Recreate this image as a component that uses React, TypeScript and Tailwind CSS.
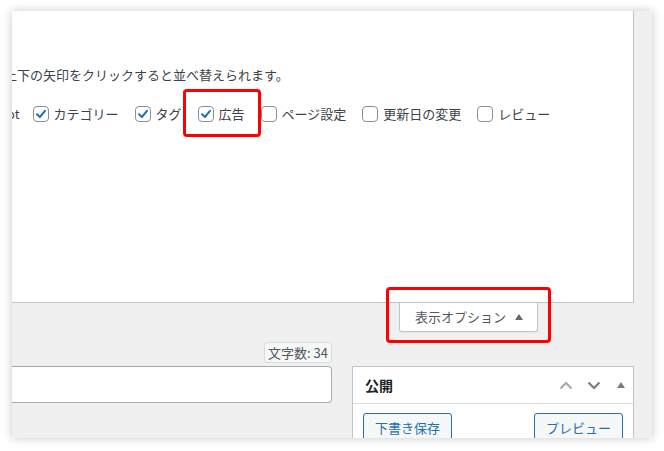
import React from "react";

const jp = { fontFamily: '"Noto Sans CJK JP", "Noto Sans", sans-serif' };

const Box = ({ checked }: { checked?: boolean }) => (
  <span className="flex h-[16px] w-[16px] shrink-0 items-center justify-center rounded-[4px] border border-[#8c8f94] bg-white">
    {checked && (
      <svg width="14" height="14" viewBox="0 0 14 14">
        <path d="M3 7.2 L5.9 10 L11 3.8" fill="none" stroke="#2271b1" strokeWidth="2" strokeLinecap="round" strokeLinejoin="round" />
      </svg>
    )}
  </span>
);

const Option = ({ label, checked }: { label: string; checked?: boolean }) => (
  <label className="flex items-center gap-[5px]">
    <Box checked={checked} />
    <span>{label}</span>
  </label>
);

const Triangle = ({ color }: { color: string }) => (
  <svg width="8" height="6" viewBox="0 0 8 6">
    <path d="M0 6 L4 0 L8 6 Z" fill={color} />
  </svg>
);

export default function App() {
  return (
    <div className="relative h-[451px] w-[664px] overflow-hidden bg-white" style={jp}>
      <div className="ml-[12px] mt-[11px] h-[427px] w-[640px] overflow-hidden bg-[#f0f0f1] shadow-[0_0_9px_rgba(0,0,0,0.22)]">
        {/* screen options panel */}
        <div className="h-[292px] w-[622px] overflow-hidden border-b border-r border-[#c3c4c7] bg-white pt-[54px] text-[13px] leading-[20px] text-[#3c434a]">
          <p className="-ml-[8px] whitespace-nowrap">上下の矢印をクリックすると並べ替えられます。</p>
          <div className="mt-[19px] flex items-center gap-[16px] whitespace-nowrap">
            <span className="-ml-[5px] -mr-[3px]">ot</span>
            <Option label="カテゴリー" checked />
            <Option label="タグ" checked />
            <Option label="広告" checked />
            <Option label="ページ設定" />
            <Option label="更新日の変更" />
            <Option label="レビュー" />
          </div>
        </div>

        {/* screen options toggle */}
        <div className="flex pl-[387px]">
          <button className="flex h-[29px] w-[139px] items-center gap-[9px] rounded-b-[3px] border border-t-0 border-[#c3c4c7] bg-white pl-[15px] text-[13px] text-[#50575e] shadow-[0_1px_1px_rgba(0,0,0,0.04)]">
            <span>表示オプション</span>
            <Triangle color="#646970" />
          </button>
        </div>

        <div className="mt-[10px] flex">
          {/* left column */}
          <div className="flex w-[320px] flex-col items-end">
            <span className="flex h-[21px] items-center rounded-[3px] border border-[#dcdcde] bg-[#f6f7f7] px-[3px] text-[13px] text-[#50575e]">
              文字数: 34
            </span>
            <div className="mt-[3px] h-[37px] w-full rounded-r-[4px] border border-l-0 border-[#a7aaad] bg-white" />
          </div>

          {/* publish box */}
          <div className="ml-[20px] mt-[24px] w-[282px] border border-[#c3c4c7] bg-white">
            <div className="flex h-[37px] items-center border-b border-[#dcdcde] pl-[12px] pr-[8px]">
              <h2 className="text-[14px] font-bold text-[#1d2327]">公開</h2>
              <div className="ml-auto flex items-center">
                <svg width="14" height="9" viewBox="0 0 14 9" className="mr-[14px]">
                  <path d="M1.5 7.5 L7 2 L12.5 7.5" fill="none" stroke="#a7aaad" strokeWidth="2.2" />
                </svg>
                <svg width="14" height="9" viewBox="0 0 14 9" className="mr-[16px]">
                  <path d="M1.5 1.5 L7 7 L12.5 1.5" fill="none" stroke="#787c82" strokeWidth="2.2" />
                </svg>
                <Triangle color="#787c82" />
              </div>
            </div>
            <div className="flex justify-between px-[10px] pt-[9px]">
              <button className="h-[30px] rounded-[3px] border border-[#2271b1] bg-[#f6f7f7] px-[11px] text-[13px] text-[#2271b1]">
                下書き保存
              </button>
              <button className="h-[30px] rounded-[3px] border border-[#2271b1] bg-[#f6f7f7] px-[11px] text-[13px] text-[#2271b1]">
                プレビュー
              </button>
            </div>
          </div>
        </div>
      </div>

      {/* annotation highlights */}
      <div className="absolute left-[183px] top-[89px] h-[48px] w-[78px] rounded-[4px] border-[3px] border-[#ff0000]" />
      <div className="absolute left-[386px] top-[287px] h-[56px] w-[165px] rounded-[4px] border-[3px] border-[#ff0000]" />
    </div>
  );
}
